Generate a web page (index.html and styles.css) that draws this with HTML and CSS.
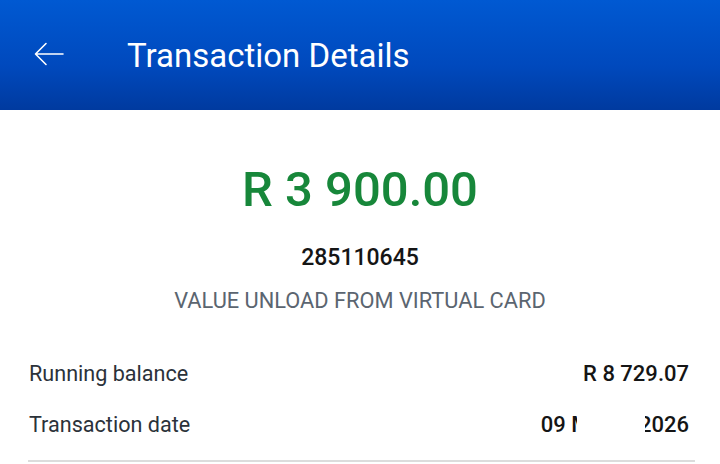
FILE: index.html
```html
<!DOCTYPE html>
<html>
<head>
<meta charset="utf-8">
<link rel="stylesheet" href="styles.css">
</head>
<body>
<header class="appbar">
  <svg class="back" width="30" height="24" viewBox="0 0 30 24"><path d="M29 12H2M12 1.5L1.5 12 12 22.5" fill="none" stroke="#fff" stroke-width="1.6" stroke-linecap="round" stroke-linejoin="round"/></svg>
  <h1 class="title">Transaction Details</h1>
</header>
<main class="content">
  <section class="summary">
    <div class="amount">R 3 900.00</div>
    <div class="ref">285110645</div>
    <div class="desc">VALUE UNLOAD FROM VIRTUAL CARD</div>
  </section>
  <section class="details">
    <div class="row"><span class="label">Running balance</span><span class="value">R 8 729.07</span></div>
    <div class="row"><span class="label">Transaction date</span><span class="value date">09 March 2026<span class="mask"></span></span></div>
  </section>
</main>
</body>
</html>
```
FILE: styles.css
```css
* { box-sizing: border-box; }
html, body { margin: 0; padding: 0; }
body {
  width: 720px;
  height: 464px;
  overflow: hidden;
  background: #fff;
  font-family: Roboto, "Noto Sans", sans-serif;
}
.appbar {
  height: 110px;
  background: linear-gradient(180deg, #0059d2 0%, #0049bd 60%, #003a9f 100%);
  display: flex;
  align-items: center;
  padding-left: 34px;
}
.back { display: block; margin-top: -2px; }
.title {
  margin: 0 0 0 63px;
  color: #fff;
  font-weight: 400;
  font-size: 33px;
  letter-spacing: 0;
}
.content { padding: 0 25px 0 28px; }
.summary {
  display: flex;
  flex-direction: column;
  align-items: center;
  padding-right: 3px;
}
.amount {
  margin-top: 50px;
  color: #17873a;
  font-size: 49px;
  font-weight: 500;
  line-height: 60px;
}
.ref {
  margin-top: 24px;
  font-size: 23px;
  font-weight: 500;
  color: #151515;
  line-height: 28px;
}
.desc {
  margin-top: 15px;
  font-size: 21.8px;
  color: #5b6570;
  line-height: 28px;
}
.details {
  margin-top: 33px;
  border-bottom: 2px solid #dcdcdc;
  padding-bottom: 10px;
}
.row {
  display: flex;
  justify-content: space-between;
  align-items: center;
  height: 51px;
  font-size: 21.6px;
  padding: 0 6px 0 1px;
}
.label { color: #2b323a; }
.value { color: #151515; font-weight: 500; font-size: 22px; position: relative; }
.mask {
  position: absolute;
  top: 0;
  bottom: 0;
  right: 44px;
  width: 68px;
  background: #fff;
}
```
